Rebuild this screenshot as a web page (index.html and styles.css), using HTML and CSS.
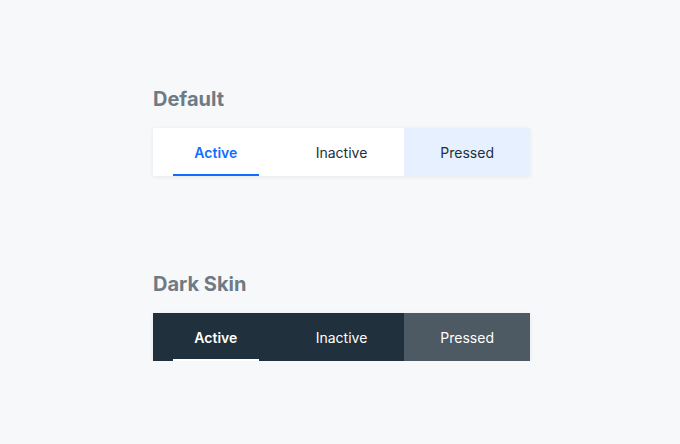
FILE: index.html
```html
<!DOCTYPE html>
<html lang="en">
<head>
    <meta charset="UTF-8">
    <meta name="viewport" content="width=device-width, initial-scale=1.0">
    <title>Tabs</title>
    <link rel="stylesheet" href="styles.css">
</head>
<body>
    <main class="page">
        <section class="demo">
            <h2>Default</h2>
            <div class="tabs">
                <div class="tab active">Active</div>
                <div class="tab">Inactive</div>
                <div class="tab pressed">Pressed</div>
            </div>
        </section>

        <section class="demo">
            <h2>Dark Skin</h2>
            <div class="tabs dark">
                <div class="tab active">Active</div>
                <div class="tab">Inactive</div>
                <div class="tab pressed">Pressed</div>
            </div>
        </section>
    </main>
</body>
</html>
```

FILE: styles.css
```css
/* Tabs preview */
body {
    font-family: Inter, "Noto Sans", sans-serif;
    margin: 0;
    padding: 0;
    background-color: #f7f8fa;
}

.page {
    display: flex;
    flex-direction: column;
    gap: 96px;
    padding: 87px 0 0 153px;
}

.demo h2 {
    margin: 0 0 17px 0;
    font-size: 20px;
    line-height: 24px;
    font-weight: 700;
    color: #6f7a84;
}

.tabs {
    display: grid;
    grid-template-columns: repeat(3, 1fr);
    width: 377px;
    background-color: #fff;
    box-shadow: 0 1px 4px rgba(22, 45, 61, 0.08);
}

.tab {
    position: relative;
    height: 48px;
    display: flex;
    align-items: center;
    justify-content: center;
    font-size: 14px;
    color: #20303c;
}

.tab.active {
    color: #116dff;
    font-weight: 600;
}

.tab.active::after {
    content: "";
    position: absolute;
    left: 20px;
    right: 20px;
    bottom: 0;
    height: 2px;
    background-color: #116dff;
}

.tab.pressed {
    background-color: #e7f0ff;
}

.tabs.dark {
    background-color: #20303c;
}

.tabs.dark .tab {
    color: #fff;
}

.tabs.dark .tab.active::after {
    background-color: #fff;
}

.tabs.dark .tab.pressed {
    background-color: #4d5963;
}
```
